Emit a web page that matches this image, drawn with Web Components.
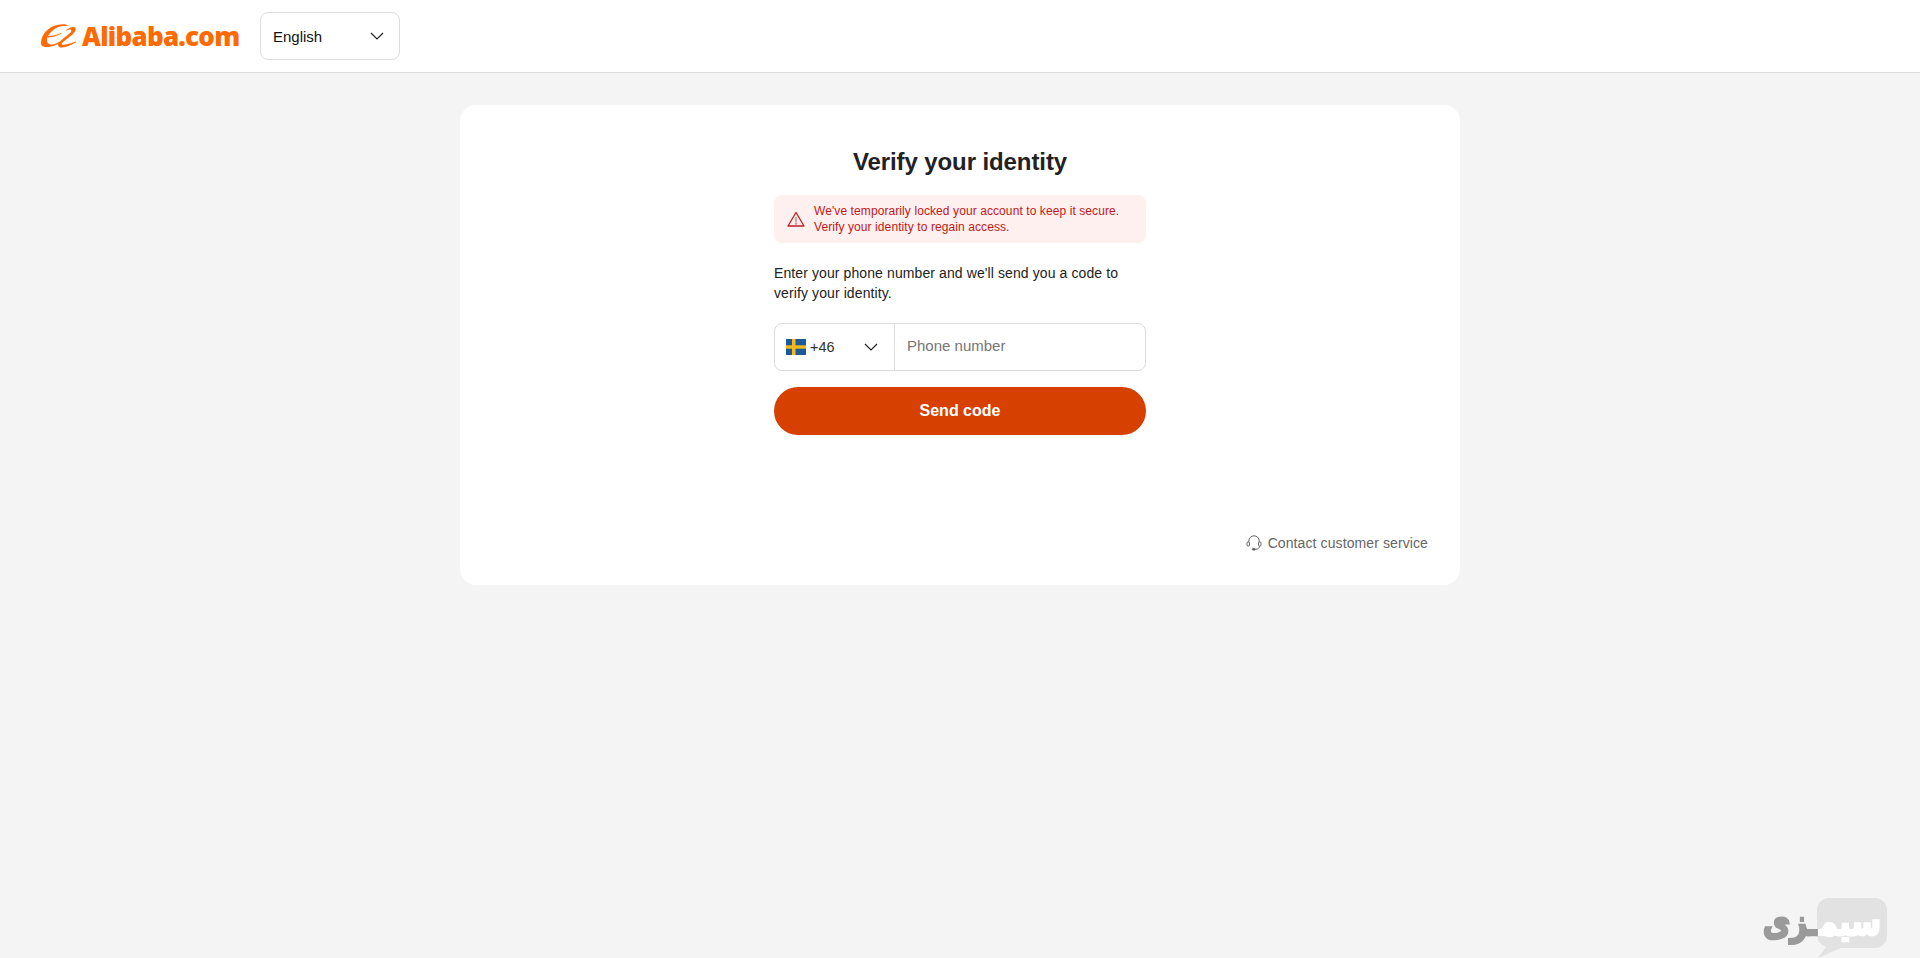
<!DOCTYPE html>
<html>
<head>
<meta charset="utf-8">
<title>Verify your identity</title>
<style>
  html, body { margin: 0; height: 100%; }
  body { background: #f4f4f4; font-family: "Liberation Sans", Arial, sans-serif; color: #222; }
</style>
</head>
<body>
<site-header></site-header>
<page-main>
  <verify-card></verify-card>
</page-main>
<water-mark></water-mark>

<script>
const chevron = `<svg width="14" height="8" viewBox="0 0 14 8" fill="none"><path d="M1 1l6 6 6-6" stroke="#222" stroke-width="1.2"/></svg>`;

class SiteHeader extends HTMLElement {
  constructor() {
    super();
    this.attachShadow({ mode: "open" }).innerHTML = `
    <style>
      :host { display: flex; align-items: center; height: 72px; background: #fff; border-bottom: 1px solid #ddd; padding-left: 40px; }
      .logo { display: flex; align-items: center; width: 220px; gap: 6px; }
      .word { font: 800 26px/32px "Open Sans", sans-serif; color: #ff6a00; letter-spacing: -0.75px; }
      .select { box-sizing: border-box; width: 140px; height: 48px; border: 1px solid #ddd; border-radius: 8px; display: flex; align-items: center; justify-content: space-between; padding: 0 15px 0 12px; font-size: 15px; color: #111; }
    </style>
    <div class="logo">
      <svg width="36" height="24" viewBox="0 0 36 24" fill="#ff6a00">
        <path d="M1 19C1 11 8 3 17 1C22 0 27 0 29 2C25 1.500 20 2 16 4C11 7 7 12 7 16C7 20 10 21 13 20.500C16 20 19 18 23 16L23.500 16.800C19 19.500 15 22 11 22.500C6 23.500 .8 23.500 1 19z"/>
        <path d="M8 12C12 12 17 11 21 9L21.300 9.800C17 12 12 13.500 7.500 13.500z"/>
        <path d="M26 6C29 4 33 2 35 3.500C37 5 35 8 32 11C28 14 24 17 22 19C21 20.500 22 21 24 20.800C28 20.400 32 19 36 17.500L36 18.500C31 21 26 23.500 22 23.500C18 23.500 17 21 19 18.500C22 15 27 12 30 9C32 7 31.500 5.500 30 5.500C29 5.500 27.500 6 26.300 6.800z"/>
      </svg>
      <span class="word">Alibaba.com</span>
    </div>
    <div class="select"><span>English</span>${chevron}</div>`;
  }
}

class PageMain extends HTMLElement {
  constructor() {
    super();
    this.attachShadow({ mode: "open" }).innerHTML = `
    <style>:host { display: flex; justify-content: center; padding-top: 32px; }</style>
    <slot></slot>`;
  }
}

class AlertBox extends HTMLElement {
  constructor() {
    super();
    this.attachShadow({ mode: "open" }).innerHTML = `
    <style>
      :host { display: flex; align-items: center; gap: 9px; box-sizing: border-box; height: 48px; background: #fff0f0; border-radius: 8px; padding-left: 13px; color: #c01818; font-size: 12px; line-height: 16px; letter-spacing: 0.09px; }
    </style>
    <svg width="18" height="16" viewBox="0 0 18 16" fill="none" stroke="#b92020" stroke-width="1.3">
      <path d="M9 1.500L17 15H1z" stroke-linejoin="round"/><path d="M9 6v5.500" stroke="#e08a8a" stroke-width="1.600"/><path d="M9 12.200v1.200"/>
    </svg>
    <div><slot></slot></div>`;
  }
}

class PhoneField extends HTMLElement {
  constructor() {
    super();
    this.attachShadow({ mode: "open" }).innerHTML = `
    <style>
      :host { display: flex; box-sizing: border-box; height: 48px; border: 1px solid #ddd; border-radius: 8px; font-size: 15px; }
      .code { box-sizing: border-box; width: 120px; border-right: 1px solid #ddd; display: flex; align-items: center; padding-left: 11px; color: #333; }
      .num { margin-left: 4px; width: 54px; font-size: 14.5px; }
      .ph { padding: 12px 12px; color: #767676; line-height: 19px; font-size: 15px; }
    </style>
    <div class="code">
      <svg width="20" height="16" viewBox="0 0 20 16"><rect width="20" height="16" fill="#1a5a96"/><rect x="6" width="3.500" height="16" fill="#f4b81c"/><rect y="6.300" width="20" height="3.400" fill="#f4b81c"/></svg>
      <span class="num">+46</span>${chevron}
    </div>
    <div class="ph">Phone number</div>`;
  }
}

class SendButton extends HTMLElement {
  constructor() {
    super();
    this.attachShadow({ mode: "open" }).innerHTML = `
    <style>
      :host { display: flex; align-items: center; justify-content: center; height: 48px; border-radius: 24px; background: #d64000; color: #fff; font-weight: 700; font-size: 16px; }
    </style>
    <slot></slot>`;
  }
}

class ContactLink extends HTMLElement {
  constructor() {
    super();
    this.attachShadow({ mode: "open" }).innerHTML = `
    <style>
      :host { display: flex; align-items: center; justify-content: flex-end; gap: 6px; color: #666; font-size: 14px; line-height: 18px; letter-spacing: 0.1px; }
    </style>
    <svg width="16" height="16" viewBox="0 0 16 16" fill="none" stroke="#666" stroke-width="1">
      <path d="M2.800 7V6a5.200 5.200 0 0 1 10.400 0v1"/>
      <rect x="1" y="7" width="2.500" height="4" rx="1"/><rect x="12.500" y="7" width="2.500" height="4" rx="1"/>
      <path d="M13.500 11c0 2-1.500 3.200-4 3.300"/><rect x="6.300" y="13.500" width="3" height="1.600" rx=".8" fill="#666"/>
    </svg>
    <slot></slot>`;
  }
}

class VerifyCard extends HTMLElement {
  constructor() {
    super();
    this.attachShadow({ mode: "open" }).innerHTML = `
    <style>
      :host { display: flex; flex-direction: column; box-sizing: border-box; width: 1000px; height: 480px; background: #fff; border-radius: 16px; padding: 41px 32px 33px; }
      .col { width: 372px; margin: 0 auto; flex: 1; }
      h1 { margin: 0 0 17px; text-align: center; font-size: 24px; line-height: 32px; font-weight: 700; color: #222; letter-spacing: -0.1px; }
      p { margin: 20px 0 20px; font-size: 14px; line-height: 20px; color: #222; letter-spacing: 0.1px; }
      send-button { margin-top: 16px; }
    </style>
    <div class="col">
      <h1>Verify your identity</h1>
      <alert-box>We've temporarily locked your account to keep it secure.<br>Verify your identity to regain access.</alert-box>
      <p>Enter your phone number and we'll send you a code to<br>verify your identity.</p>
      <phone-field></phone-field>
      <send-button>Send code</send-button>
    </div>
    <contact-link>Contact customer service</contact-link>`;
  }
}

class WaterMark extends HTMLElement {
  constructor() {
    super();
    this.attachShadow({ mode: "open" }).innerHTML = `
    <style>
      :host { position: fixed; right: 33px; bottom: 0; width: 128px; height: 60px; }
      svg { position: absolute; right: 0; top: 0; }
      span { position: absolute; left: 0; top: 4px; right: 6px; font: 700 30px/40px "DejaVu Sans", sans-serif; color: #9a9a9a; -webkit-text-stroke: 2px #9a9a9a; white-space: nowrap; direction: rtl; text-align: right; transform: scaleY(1.25); }
      b { color: #fff; -webkit-text-stroke: 2px #fff; font-weight: 700; }
    </style>
    <svg width="74" height="60" viewBox="0 0 74 60"><path d="M16 0h46a12 12 0 0 1 12 12v26a12 12 0 0 1-12 12H28L5 60l8-11Q4 46 4 36V12A12 12 0 0 1 16 0z" fill="#e2e2e2"/></svg>
    <span><b>سیم</b>ـزی</span>`;
  }
}

customElements.define("site-header", SiteHeader);
customElements.define("page-main", PageMain);
customElements.define("alert-box", AlertBox);
customElements.define("phone-field", PhoneField);
customElements.define("send-button", SendButton);
customElements.define("contact-link", ContactLink);
customElements.define("verify-card", VerifyCard);
customElements.define("water-mark", WaterMark);
</script>
</body>
</html>
